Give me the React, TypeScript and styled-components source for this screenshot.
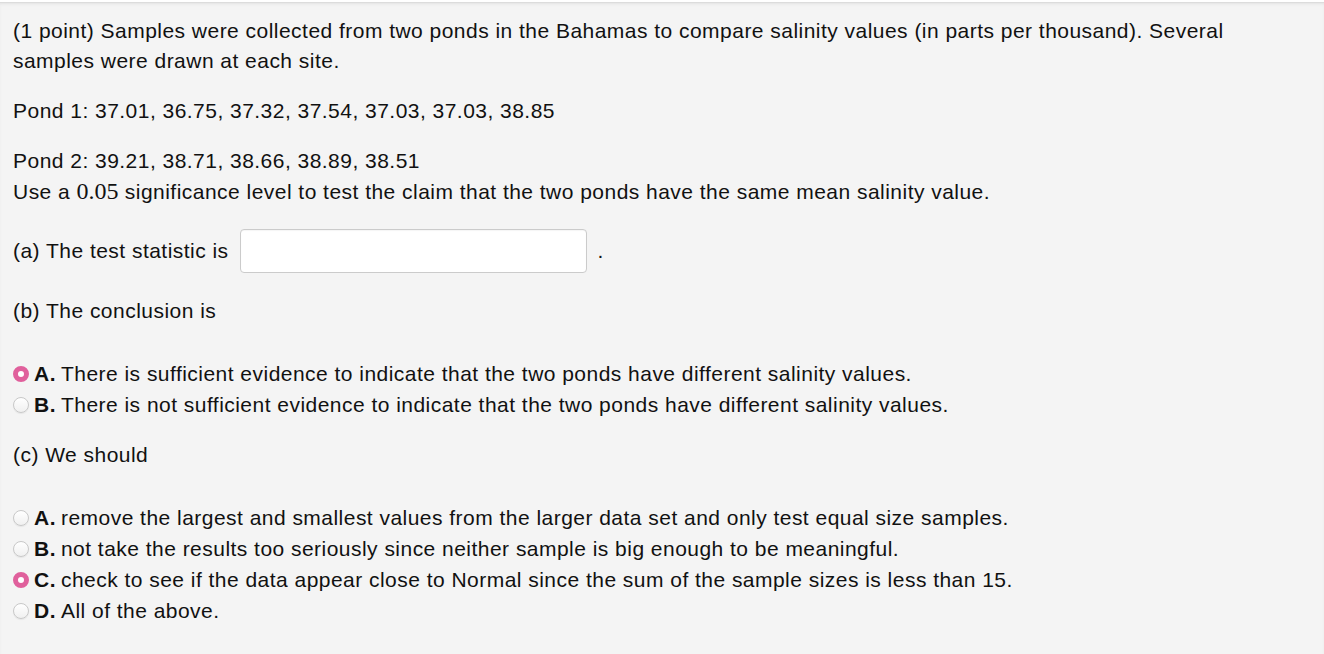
import React from 'react';
import styled, { createGlobalStyle } from 'styled-components';

const GlobalStyle = createGlobalStyle`
  html, body {
    margin: 0;
    padding: 0;
    background: #f4f4f4;
  }
  body {
    font-family: "Liberation Sans", Arial, sans-serif;
    color: #111;
  }
`;

const Page = styled.div`
  min-height: 654px;
  background: #f4f4f4;
  border-top: 2px solid #ffffff;
  box-shadow: inset 0 1px 0 #dcdcdc, inset 0 3px 3px -1px #e2e2e2;
  padding: 14px 13px 0;
  box-sizing: border-box;
  font-size: 21px;
  letter-spacing: 0.47px;
`;

const Para = styled.div<{ $gap?: number }>`
  line-height: 30px;
  margin-bottom: ${p => (p.$gap ?? 20)}px;
`;

const MathNum = styled.span`
  font-family: "Liberation Serif", "Times New Roman", serif;
  font-size: 24px;
  letter-spacing: 0;
`;

const AnswerRow = styled.div`
  display: flex;
  align-items: center;
  margin: 22px 0 23px;
`;

const AnswerBox = styled.input`
  width: 347px;
  height: 44px;
  box-sizing: border-box;
  margin: 0 11px 0 11px;
  border: 1px solid #cbcbcb;
  border-radius: 4px;
  background: #fff;
  box-shadow: inset 0 1px 1px rgba(0, 0, 0, 0.04);
  outline: none;
`;

const Options = styled.div<{ $top: number; $bottom: number }>`
  margin: ${p => p.$top}px 0 ${p => p.$bottom}px;
`;

const Option = styled.label`
  display: flex;
  align-items: center;
  height: 31px;
`;

const Radio = styled.span<{ $on?: boolean }>`
  width: 16px;
  height: 16px;
  margin: 0 5px 0 0;
  border-radius: 50%;
  box-sizing: border-box;
  flex-shrink: 0;
  background: ${p => (p.$on ? '#fff' : 'linear-gradient(#ffffff, #f0f0f0)')};
  border: ${p => (p.$on ? '5px solid #e0609c' : '1px solid #c8c8c8')};
  box-shadow: ${p => (p.$on ? 'none' : '0 1px 1px rgba(0, 0, 0, 0.06)')};
`;

const Letter = styled.b`
  font-weight: bold;
  margin-right: 5px;
`;

type Choice = { letter: string; text: string; on?: boolean };

const partB: Choice[] = [
  { letter: 'A.', text: 'There is sufficient evidence to indicate that the two ponds have different salinity values.', on: true },
  { letter: 'B.', text: 'There is not sufficient evidence to indicate that the two ponds have different salinity values.' },
];

const partC: Choice[] = [
  { letter: 'A.', text: 'remove the largest and smallest values from the larger data set and only test equal size samples.' },
  { letter: 'B.', text: 'not take the results too seriously since neither sample is big enough to be meaningful.' },
  { letter: 'C.', text: 'check to see if the data appear close to Normal since the sum of the sample sizes is less than 15.', on: true },
  { letter: 'D.', text: 'All of the above.' },
];

const ChoiceList = ({ items }: { items: Choice[] }) => (
  <>
    {items.map(c => (
      <Option key={c.letter}>
        <Radio $on={c.on} />
        <Letter>{c.letter}</Letter>
        {c.text}
      </Option>
    ))}
  </>
);

export default function App() {
  return (
    <Page>
      <GlobalStyle />
      <Para>
        (1 point) Samples were collected from two ponds in the Bahamas to compare salinity values (in parts per thousand). Several
        <br />
        samples were drawn at each site.
      </Para>
      <Para>Pond 1: 37.01, 36.75, 37.32, 37.54, 37.03, 37.03, 38.85</Para>
      <Para $gap={0}>
        Pond 2: 39.21, 38.71, 38.66, 38.89, 38.51
        <br />
        Use a <MathNum>0.05</MathNum> significance level to test the claim that the two ponds have the same mean salinity value.
      </Para>
      <AnswerRow>
        (a) The test statistic is
        <AnswerBox type="text" />
        .
      </AnswerRow>
      <Para $gap={0}>(b) The conclusion is</Para>
      <Options $top={32} $bottom={20}>
        <ChoiceList items={partB} />
      </Options>
      <Para $gap={0}>(c) We should</Para>
      <Options $top={32} $bottom={0}>
        <ChoiceList items={partC} />
      </Options>
    </Page>
  );
}
